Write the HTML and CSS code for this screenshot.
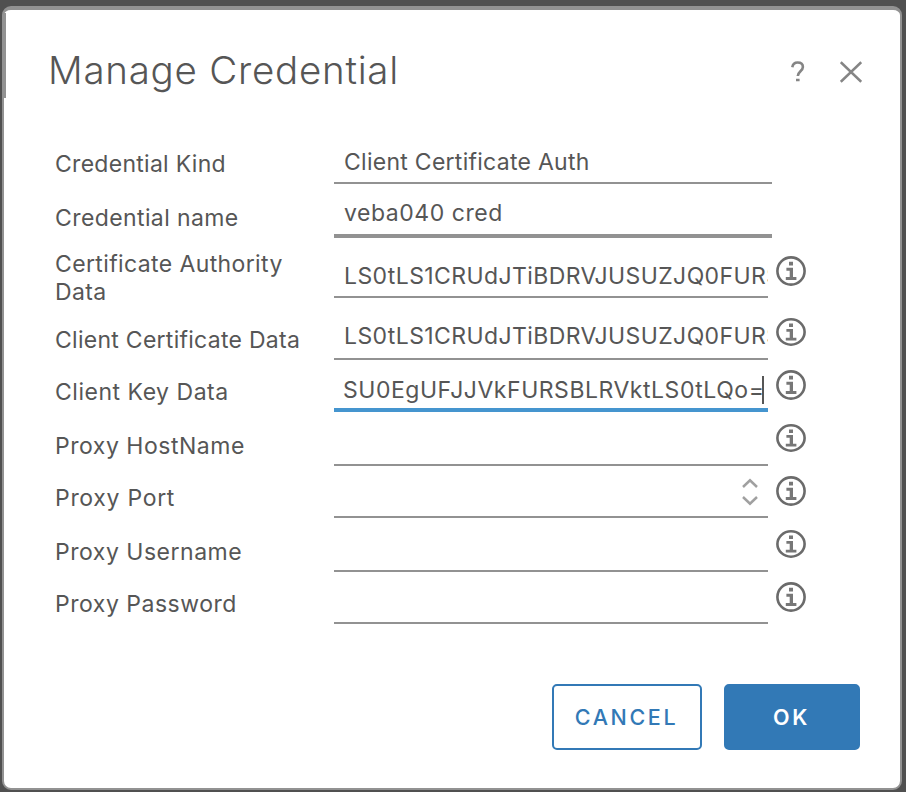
FILE: index.html
```html
<!DOCTYPE html>
<html lang="en">
<head>
<meta charset="utf-8">
<title>Manage Credential</title>
<link rel="stylesheet" href="styles.css">
</head>
<body>
<svg class="sprite" aria-hidden="true">
  <symbol id="info" viewBox="0 0 30 30" preserveAspectRatio="none">
    <circle cx="15" cy="15" r="13.6" fill="none" stroke="#6b6b6b" stroke-width="2.6"/>
    <path d="M13 5.8h4v3.8h-4zM10.4 11.8h6.6v9.3h3.4v2.9H9.8v-2.9h3.9v-6.4h-3.3z" fill="#777"/>
  </symbol>
</svg>
<main class="modal">
  <header class="header">
    <h1>Manage Credential</h1>
    <div class="tools">
      <svg width="14" height="22" viewBox="0 0 14 22"><path d="M1.3 6.3C1.8 3 3.8 1.5 6.6 1.5c3.2 0 5.3 1.8 5.3 4.5 0 4-5.1 4.6-5.1 9.1M5 19h3.6" fill="none" stroke="#858585" stroke-width="2.6"/></svg>
      <svg width="22" height="22" viewBox="0 0 22 22"><path d="M.8 1.2l20.4 19.6M21.2 1.2L.8 20.8" fill="none" stroke="#858585" stroke-width="2.5"/></svg>
    </div>
  </header>
  <form class="form">
    <div class="row h54"><label class="kind">Credential Kind</label><div class="field wide auth"><span>Client Certificate Auth</span></div></div>
    <div class="row h54"><label class="name">Credential name</label><div class="field wide thick cred"><span>veba040 cred</span></div></div>
    <div class="row h60"><label class="authority">Certificate Authority<br>Data</label><div class="field data"><span>LS0tLS1CRUdJTiBDRVJUSUZJQ0FURS</span></div><svg class="info"><use href="#info"/></svg></div>
    <div class="row h62"><label class="certificate">Client Certificate Data</label><div class="field data raised"><span>LS0tLS1CRUdJTiBDRVJUSUZJQ0FURS</span></div><svg class="info short"><use href="#info"/></svg></div>
    <div class="row h52"><label class="key">Client Key Data</label><div class="field focus keydata"><span>SU0EgUFJJVkFURSBLRVktLS0tLQo=</span><i class="caret"></i></div><svg class="info"><use href="#info"/></svg></div>
    <div class="row h54"><label class="host">Proxy HostName</label><div class="field"></div><svg class="info short"><use href="#info"/></svg></div>
    <div class="row h52"><label class="port">Proxy Port</label><div class="field number"><svg width="16" height="28" viewBox="0 0 16 28"><path d="M1 9l7-6.7L15 9M1 19l7 6.7 7-6.7" fill="none" stroke="#a0a0a0" stroke-width="2.5"/></svg></div><svg class="info"><use href="#info"/></svg></div>
    <div class="row h54"><label class="user">Proxy Username</label><div class="field"></div><svg class="info short"><use href="#info"/></svg></div>
    <div class="row h52"><label class="password">Proxy Password</label><div class="field"></div><svg class="info"><use href="#info"/></svg></div>
  </form>
  <footer class="footer"><button class="cancel" type="button">CANCEL</button><button class="ok" type="button">OK</button></footer>
</main>
</body>
</html>
```
FILE: styles.css
```css
* { box-sizing: border-box; }
body {
  margin: 0;
  height: 792px;
  padding: 6px 4px 2px 2px;
  overflow: hidden;
  background: #505050;
  color: #565656;
  font-family: Inter, "Liberation Sans", sans-serif;
}
.sprite { position: absolute; width: 0; height: 0; }
.modal {
  position: relative;
  height: 784px;
  border: 2px solid #929292;
  border-top-width: 4px;
  border-radius: 9px;
  background: #fff;
}
.modal::before {
  content: "";
  position: absolute;
  left: -1px;
  top: 3px;
  width: 3px;
  height: 85px;
  background: #929292;
}
.header {
  display: flex;
  justify-content: space-between;
  align-items: center;
  height: 120px;
  padding: 3px 38px 0 44px;
}
h1 { margin: 0; padding-bottom: 3px; font-size: 38.5px; font-weight: 330; letter-spacing: .75px; line-height: 50px; white-space: nowrap; }
.tools { display: flex; gap: 35px; align-items: center; }
.form { display: flex; flex-direction: column; padding-left: 51px; }
.row { display: flex; align-items: flex-end; }
.h52 { height: 52px; }
.h54 { height: 54px; }
.h60 { height: 60px; }
.h62 { height: 62px; }
label {
  display: flex;
  align-items: center;
  flex: 0 0 279px;
  height: 40px;
  font-size: 23px;
  line-height: 28px;
  white-space: nowrap;
}
.kind { letter-spacing: .28px; }
.name { letter-spacing: .4px; }
.authority { letter-spacing: .38px; }
.certificate { letter-spacing: .27px; }
.key, .host, .user, .password { letter-spacing: .52px; }
.port { letter-spacing: .7px; }
.field {
  display: flex;
  align-items: center;
  width: 434px;
  height: 42px;
  padding-left: 10px;
  border-bottom: 2px solid #929292;
  overflow: hidden;
  font-size: 23px;
  line-height: 30px;
  white-space: nowrap;
}
.wide { width: 438px; }
.thick { height: 48px; border-bottom-width: 4px; padding-top: 1px; }
.raised { height: 46px; }
.auth { letter-spacing: .27px; }
.cred { letter-spacing: .54px; }
.data { letter-spacing: .4px; }
.focus { height: 42px; border-bottom: 4px solid #4595cf; padding: 1px 0 0 9px; }
.keydata { letter-spacing: .53px; }
.caret { flex: none; width: 2px; height: 28px; margin-left: -2px; background: #565656; }
.number { justify-content: flex-end; padding: 0 10px 4px 0; height: 46px; }
.info { width: 30px; height: 30px; margin: 0 0 12px 8px; }
.info.short { height: 28px; margin-bottom: 14px; }
.footer { display: flex; justify-content: flex-end; gap: 22px; padding: 60px 40px 0 0; }
button {
  height: 66px;
  padding: 0 1px 0 0;
  border: 2px solid #3279b6;
  border-radius: 5px;
  font: 500 21.5px Inter, "Liberation Sans", sans-serif;
  letter-spacing: 2.6px;
}
.cancel { width: 150px; background: #fff; color: #3279b6; }
.ok { width: 136px; background: #3279b6; color: #fff; font-weight: 600; }
```
